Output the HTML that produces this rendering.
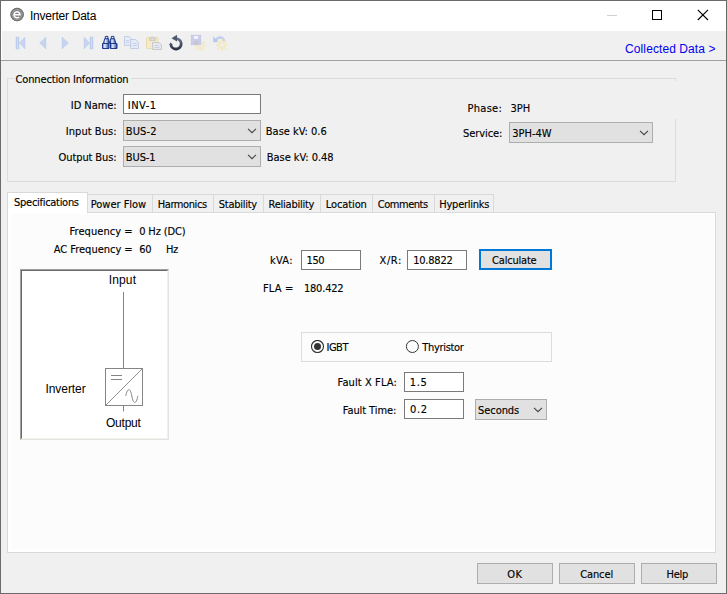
<!DOCTYPE html>
<html><head><meta charset="utf-8"><title>Inverter Data</title>
<style>
html,body{margin:0;padding:0;}
body{width:727px;height:594px;position:relative;overflow:hidden;background:#f0f0f0;font-family:"DejaVu Sans Condensed","Liberation Sans",sans-serif;font-size:11px;color:#000;}
.abs{position:absolute;}
.t{position:absolute;white-space:nowrap;line-height:14px;font-size:11px;font-family:"DejaVu Sans Condensed","Liberation Sans",sans-serif;-webkit-text-stroke:0.14px currentColor;}
.a{font-family:"Liberation Sans",sans-serif;-webkit-text-stroke:0;}
.inp{position:absolute;background:#fff;border:1px solid #7a7a7a;box-sizing:border-box;}
.cmb{position:absolute;background:#e1e1e1;border:1px solid #adadad;box-sizing:border-box;}
.btn{position:absolute;background:#e1e1e1;border:1px solid #adadad;box-sizing:border-box;}
.tab{position:absolute;top:194px;height:18px;box-sizing:border-box;border:1px solid #d9d9d9;border-bottom:none;border-left:none;background:#f0f0f0;}
.ln{position:absolute;background:#dcdcdc;}
</style></head><body>
<!-- title bar -->
<div class="abs" style="left:0;top:0;width:727px;height:31px;background:#fff;"></div>
<svg class="abs" style="left:9px;top:7px" width="16" height="16" viewBox="0 0 16 16"><circle cx="8.1" cy="7.5" r="6.7" fill="#858585"/><circle cx="8.1" cy="7.5" r="6.2" fill="none" stroke="#6f6f6f" stroke-width="1"/><circle cx="8.1" cy="7.5" r="5" fill="none" stroke="#a2a2a2" stroke-width=".8"/><path d="M5.1 7.7h5.9a3 3 0 1 0-.9 2.300" fill="none" stroke="#fff" stroke-width="1.5"/></svg>
<!-- caption buttons -->
<div class="abs" style="left:607px;top:15px;width:10px;height:1px;background:#cfcfcf;"></div>
<div class="abs" style="left:652px;top:10px;width:10px;height:10px;box-sizing:border-box;border:1px solid #000;"></div>
<svg class="abs" style="left:697px;top:9px" width="12" height="12" viewBox="0 0 12 12"><path d="M0.8 0.8L11 11M11 0.8L0.8 11" stroke="#000" stroke-width="1.1" fill="none"/></svg>
<!-- toolbar -->
<div class="abs" style="left:1px;top:31px;width:1px;height:29px;background:#fff;"></div>
<div class="abs" style="left:1px;top:60px;width:725px;height:1px;background:#a0a0a0;"></div>
<svg class="abs" style="left:0;top:31px" width="240" height="29" viewBox="0 31 240 29">
 <defs>
  <linearGradient id="lb" x1="0" y1="0" x2="1" y2="0"><stop offset="0" stop-color="#b6c8ea"/><stop offset="0.5" stop-color="#d0dcf4"/><stop offset="1" stop-color="#b6c8ea"/></linearGradient>
  <linearGradient id="bn" x1="0" y1="0" x2="1" y2="0"><stop offset="0" stop-color="#4a6cc0"/><stop offset="0.35" stop-color="#e8eefc"/><stop offset="1" stop-color="#1f3f96"/></linearGradient>
  <linearGradient id="un" x1="0" y1="0" x2="0" y2="1"><stop offset="0" stop-color="#66748c"/><stop offset="1" stop-color="#2c3444"/></linearGradient>
 </defs>
 <!-- first -->
 <rect x="16" y="37" width="3" height="12" fill="url(#lb)" stroke="#b4c6ea" stroke-width=".4"/><path d="M19.4 43L25 37v12z" fill="#c6d4f0" stroke="#b4c6ea" stroke-width=".4"/>
 <!-- prev -->
 <path d="M39.6 43L46 37v12z" fill="#c6d4f0" stroke="#b4c6ea" stroke-width=".4"/>
 <!-- next -->
 <path d="M68.5 43L62 37v12z" fill="#c6d4f0" stroke="#b4c6ea" stroke-width=".4"/>
 <!-- last -->
 <rect x="90" y="37" width="3" height="12" fill="url(#lb)" stroke="#b4c6ea" stroke-width=".4"/><path d="M89.6 43L84 37v12z" fill="#c6d4f0" stroke="#b4c6ea" stroke-width=".4"/>
 <!-- binoculars -->
 <g stroke="#1c3a8c" stroke-width="1" stroke-linejoin="round">
  <rect x="105.300" y="36.400" width="2.600" height="2.400" fill="#eef2fc"/>
  <path d="M104.600 38.800h4l.7 4.700h-5.800z" fill="url(#bn)"/>
  <rect x="102.500" y="43.500" width="6.500" height="5" fill="url(#bn)"/>
  <rect x="111.300" y="36.400" width="2.600" height="2.400" fill="#eef2fc"/>
  <path d="M110.600 38.800h4l1.200 4.700h-5.800z" fill="url(#bn)"/>
  <rect x="110.500" y="43.500" width="6.500" height="5" fill="url(#bn)"/>
  <path d="M109 42.200h1.500" stroke-width="1.800"/>
 </g>
 <!-- copy -->
 <g stroke="#c3cde6" stroke-width="1" fill="#e6eaf5">
  <path d="M124.5 36.5h4.500l2 2v7h-6.500z"/>
  <path d="M130.5 39.500h5l3 3v6h-8z"/>
  <path d="M126 40.500h3M126 42.500h3M132.500 43.500h4.500M132.500 45.500h4.500" stroke="#c6d2ec"/>
 </g>
 <!-- paste -->
 <g>
  <rect x="146.500" y="37.500" width="11.5" height="11" rx="1" fill="#f5ebc6" stroke="#e8dcae"/>
  <path d="M149.500 40.500v-2h1.700v-1.500h2.600v1.500h1.700v2z" fill="#dcdcdc" stroke="#c8c8c4" stroke-width=".8"/>
  <path d="M152.500 42.500h6.500l2.500 2.500v4.500h-9z" fill="#e6e9f2" stroke="#c9c9c9"/>
  <path d="M154.500 45.500h4M154.500 47.500h5" stroke="#c8d0e4"/>
 </g>
 <!-- undo -->
 <g>
  <path d="M175.800 38.600A5.200 5.200 0 1 1 170.800 44.300" fill="none" stroke="url(#un)" stroke-width="2.800"/>
  <path d="M171.500 38.200L177 34.800V41.600z" fill="#4c5870"/>
  <path d="M169 44.800l1.800-2.200 1.800 2.200z" fill="#3c465a"/>
 </g>
 <!-- save + gear -->
 <g transform="translate(200.5 45.5)" fill="#f2e9c8"><circle r="3.60"/><rect x="-1" y="-5.80" width="2" height="3.48" transform="rotate(0)"/><rect x="-1" y="-5.80" width="2" height="3.48" transform="rotate(45)"/><rect x="-1" y="-5.80" width="2" height="3.48" transform="rotate(90)"/><rect x="-1" y="-5.80" width="2" height="3.48" transform="rotate(135)"/><rect x="-1" y="-5.80" width="2" height="3.48" transform="rotate(180)"/><rect x="-1" y="-5.80" width="2" height="3.48" transform="rotate(225)"/><rect x="-1" y="-5.80" width="2" height="3.48" transform="rotate(270)"/><rect x="-1" y="-5.80" width="2" height="3.48" transform="rotate(315)"/><circle r="1.62" fill="#f0f0f0"/></g>
 <g>
  <rect x="191.200" y="35.200" width="9.600" height="9.600" fill="#cbcbee" stroke="#c0c0e6" stroke-width=".6"/>
  <rect x="193.800" y="36" width="4.400" height="2.800" fill="#f4f4fa"/>
  <rect x="194" y="41" width="4.400" height="3.400" fill="#c4c6cc"/>
 </g>
 <!-- undo + gear -->
 <path d="M216.500 40.200C217.500 36.800 222.500 36.200 224.200 41" fill="none" stroke="#bfd0f0" stroke-width="2.600"/>
 <path d="M213.200 36.200v6h6z" fill="#b6c9ee"/>
 <g transform="translate(222 45)" fill="#f2e9c8"><circle r="3.84"/><rect x="-1" y="-6.20" width="2" height="3.72" transform="rotate(0)"/><rect x="-1" y="-6.20" width="2" height="3.72" transform="rotate(45)"/><rect x="-1" y="-6.20" width="2" height="3.72" transform="rotate(90)"/><rect x="-1" y="-6.20" width="2" height="3.72" transform="rotate(135)"/><rect x="-1" y="-6.20" width="2" height="3.72" transform="rotate(180)"/><rect x="-1" y="-6.20" width="2" height="3.72" transform="rotate(225)"/><rect x="-1" y="-6.20" width="2" height="3.72" transform="rotate(270)"/><rect x="-1" y="-6.20" width="2" height="3.72" transform="rotate(315)"/><circle r="1.74" fill="#f0f0f0"/></g>
</svg>

<!-- groupbox -->
<div class="ln" style="left:7px;top:78px;width:7px;height:1px;"></div>
<div class="ln" style="left:131px;top:78px;width:545px;height:1px;"></div>
<div class="ln" style="left:7px;top:78px;width:1px;height:104px;"></div>
<div class="ln" style="left:7px;top:181px;width:669px;height:1px;"></div>
<div class="ln" style="left:675px;top:78px;width:1px;height:3px;"></div>
<div class="ln" style="left:675px;top:119px;width:1px;height:63px;"></div>

<div class="inp" style="left:123px;top:94px;width:138px;height:20px;"></div>
<div class="cmb" style="left:123px;top:120px;width:138px;height:21px;"></div>
<svg class="abs" style="left:247px;top:128px" width="10" height="7" viewBox="0 0 10 7"><path d="M1 0.8L5 4.7L9 0.8" fill="none" stroke="#444" stroke-width="1.1"/></svg>
<div class="cmb" style="left:123px;top:146px;width:138px;height:21px;"></div>
<svg class="abs" style="left:247px;top:154px" width="10" height="7" viewBox="0 0 10 7"><path d="M1 0.8L5 4.7L9 0.8" fill="none" stroke="#444" stroke-width="1.1"/></svg>
<div class="cmb" style="left:509px;top:122px;width:144px;height:21px;"></div>
<svg class="abs" style="left:639px;top:130px" width="10" height="7" viewBox="0 0 10 7"><path d="M1 0.8L5 4.7L9 0.8" fill="none" stroke="#444" stroke-width="1.1"/></svg>

<!-- tab pane -->
<div class="abs" style="left:7px;top:212px;width:709px;height:341px;box-sizing:border-box;border:1px solid #d9d9d9;background:#fff;"></div>
<div class="abs" style="left:11px;top:214px;width:703px;height:336px;background:#fcfcfd;"></div>
<!-- tabs -->
<div class="tab" style="left:88px;width:65px;"></div>
<div class="tab" style="left:153px;width:61px;"></div>
<div class="tab" style="left:214px;width:50px;"></div>
<div class="tab" style="left:264px;width:57px;"></div>
<div class="tab" style="left:321px;width:52px;"></div>
<div class="tab" style="left:373px;width:62px;"></div>
<div class="tab" style="left:435px;width:59px;"></div>
<div class="abs" style="left:7px;top:192px;width:81px;height:21px;box-sizing:border-box;border:1px solid #d9d9d9;border-bottom:none;background:#fff;"></div>

<!-- diagram box -->
<div class="abs" style="left:20px;top:269px;width:149px;height:171px;box-sizing:border-box;border:1px solid;border-color:#a0a0a0 #e3e3e3 #e3e3e3 #a0a0a0;background:#fff;"></div>
<div class="abs" style="left:21px;top:270px;width:147px;height:169px;box-sizing:border-box;border:1px solid;border-color:#696969 #f3f1e6 #f3f1e6 #696969;"></div>
<svg class="abs" style="left:22px;top:271px" width="145" height="167" viewBox="22 271 145 167">
 <g fill="none" stroke="#858585" stroke-width="1">
  <path d="M123.5 292V368M123.5 405V411.5"/>
  <rect x="105.5" y="368.5" width="37" height="37"/>
  <path d="M105.5 405.5L142.5 368.5" stroke="#8c9088"/>
  <path d="M111 375.5H122M111 379.5H122"/>
  <path d="M125.800 396C127.300 387.500 130.300 387.500 131.800 396S136.300 404.800 137.800 396"/>
 </g>
</svg>

<!-- inputs -->
<div class="inp" style="left:301px;top:250px;width:60px;height:20px;"></div>
<div class="inp" style="left:407px;top:250px;width:60px;height:20px;"></div>
<div class="btn" style="left:479px;top:249px;width:73px;height:21px;border:2px solid #0078d7;"></div>

<!-- radio group -->
<div class="abs" style="left:301px;top:332px;width:251px;height:30px;box-sizing:border-box;border:1px solid #dcdcdc;"></div>
<svg class="abs" style="left:310px;top:340px" width="15" height="15" viewBox="0 0 15 15"><circle cx="7.5" cy="6.5" r="6" fill="#fff" stroke="#2a2a2a" stroke-width="1.1"/><circle cx="7.5" cy="6.5" r="3.5" fill="#333"/></svg>
<svg class="abs" style="left:404px;top:340px" width="15" height="15" viewBox="0 0 15 15"><circle cx="8.4" cy="6.5" r="6" fill="#fff" stroke="#333" stroke-width="1"/></svg>

<div class="inp" style="left:404px;top:372px;width:60px;height:20px;"></div>
<div class="inp" style="left:404px;top:399px;width:60px;height:20px;"></div>
<div class="cmb" style="left:475px;top:399px;width:72px;height:21px;"></div>
<svg class="abs" style="left:533px;top:407px" width="10" height="7" viewBox="0 0 10 7"><path d="M1 0.8L5 4.7L9 0.8" fill="none" stroke="#444" stroke-width="1.1"/></svg>

<!-- buttons -->
<div class="btn" style="left:477px;top:563px;width:76px;height:21px;"></div>
<div class="btn" style="left:559px;top:563px;width:76px;height:21px;"></div>
<div class="btn" style="left:641px;top:563px;width:76px;height:21px;"></div>

<div class="t a" style="left:30.0px;top:9px;letter-spacing:-0.25px;font-size:12px;">Inverter Data</div>
<div class="t a" style="left:625.1px;top:42px;letter-spacing:0.09px;font-size:12px;color:#0000f0;">Collected Data &gt;</div>
<div class="t" style="left:15.6px;top:73px;letter-spacing:-0.16px;">Connection Information</div>
<div class="t" style="left:70.8px;top:99px;letter-spacing:-0.05px;">ID Name:</div>
<div class="t" style="left:127.8px;top:99px;letter-spacing:0.48px;">INV-1</div>
<div class="t" style="left:65.8px;top:125px;letter-spacing:0.04px;">Input Bus:</div>
<div class="t" style="left:125.8px;top:125px;letter-spacing:0.14px;">BUS-2</div>
<div class="t" style="left:265.8px;top:125px;letter-spacing:-0.01px;">Base kV: 0.6</div>
<div class="t" style="left:58.6px;top:151px;letter-spacing:-0.11px;">Output Bus:</div>
<div class="t" style="left:125.8px;top:151px;letter-spacing:-0.09px;">BUS-1</div>
<div class="t" style="left:266.8px;top:151px;letter-spacing:-0.05px;">Base kV: 0.48</div>
<div class="t" style="left:467.5px;top:102px;letter-spacing:0.29px;">Phase:</div>
<div class="t" style="left:510.6px;top:102px;letter-spacing:-0.09px;">3PH</div>
<div class="t" style="left:463.0px;top:127px;letter-spacing:-0.08px;">Service:</div>
<div class="t" style="left:512.3px;top:127px;letter-spacing:-0.04px;">3PH-4W</div>
<div class="t" style="left:14.1px;top:196px;letter-spacing:-0.29px;">Specifications</div>
<div class="t" style="left:90.7px;top:198px;letter-spacing:-0.01px;">Power Flow</div>
<div class="t" style="left:157.7px;top:198px;letter-spacing:-0.41px;">Harmonics</div>
<div class="t" style="left:218.8px;top:198px;letter-spacing:-0.27px;">Stability</div>
<div class="t" style="left:268.6px;top:198px;letter-spacing:-0.25px;">Reliability</div>
<div class="t" style="left:325.7px;top:198px;letter-spacing:-0.09px;">Location</div>
<div class="t" style="left:377.8px;top:198px;letter-spacing:-0.47px;">Comments</div>
<div class="t" style="left:439.3px;top:198px;letter-spacing:-0.25px;">Hyperlinks</div>
<div class="t" style="left:69.6px;top:225px;letter-spacing:0.06px;">Frequency =</div>
<div class="t" style="left:139.2px;top:225px;letter-spacing:-0.14px;">0 Hz (DC)</div>
<div class="t" style="left:53.8px;top:243px;letter-spacing:-0.02px;">AC Frequency =</div>
<div class="t" style="left:139.2px;top:243px;letter-spacing:-0.33px;">60</div>
<div class="t" style="left:165.9px;top:243px;letter-spacing:-0.41px;">Hz</div>
<div class="t" style="left:269.9px;top:254px;letter-spacing:0.33px;">kVA:</div>
<div class="t" style="left:306.6px;top:254px;letter-spacing:-0.42px;">150</div>
<div class="t" style="left:379.5px;top:254px;letter-spacing:0.61px;">X/R:</div>
<div class="t" style="left:413.2px;top:254px;letter-spacing:-0.21px;">10.8822</div>
<div class="t" style="left:492.1px;top:254px;letter-spacing:-0.21px;">Calculate</div>
<div class="t" style="left:263.0px;top:282px;letter-spacing:0.14px;">FLA =</div>
<div class="t" style="left:303.9px;top:282px;letter-spacing:-0.19px;">180.422</div>
<div class="t" style="left:326.5px;top:341px;letter-spacing:-0.50px;">IGBT</div>
<div class="t" style="left:422.3px;top:341px;letter-spacing:-0.33px;">Thyristor</div>
<div class="t" style="left:337.6px;top:376px;letter-spacing:0.10px;">Fault X FLA:</div>
<div class="t" style="left:409.7px;top:376px;letter-spacing:0.74px;">1.5</div>
<div class="t" style="left:342.8px;top:404px;letter-spacing:-0.08px;">Fault Time:</div>
<div class="t" style="left:410.0px;top:403px;letter-spacing:0.65px;">0.2</div>
<div class="t" style="left:478.0px;top:404px;letter-spacing:-0.06px;">Seconds</div>
<div class="t" style="left:507.2px;top:568px;letter-spacing:0.47px;">OK</div>
<div class="t" style="left:580.2px;top:568px;letter-spacing:-0.11px;">Cancel</div>
<div class="t" style="left:666.6px;top:568px;letter-spacing:-0.28px;">Help</div>
<div class="t a" style="left:108.7px;top:273px;letter-spacing:0.15px;font-size:12px;">Input</div>
<div class="t a" style="left:45.5px;top:382px;letter-spacing:-0.07px;font-size:12px;">Inverter</div>
<div class="t a" style="left:106.0px;top:416px;letter-spacing:-0.23px;font-size:12px;">Output</div>

<!-- window frame -->
<div class="abs" style="left:0;top:0;width:727px;height:594px;box-sizing:border-box;border:1px solid #6b6b6b;"></div>
</body></html>
